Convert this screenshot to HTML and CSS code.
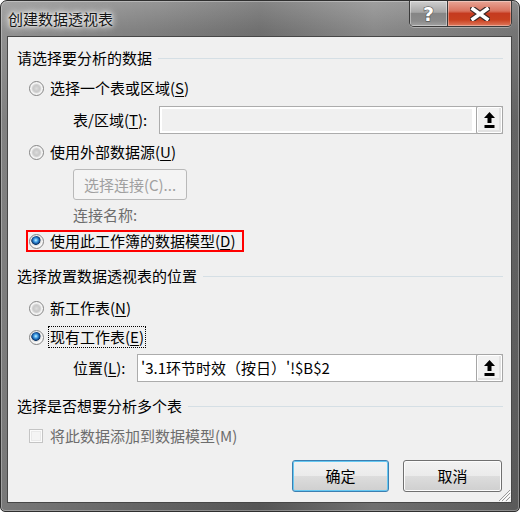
FILE: index.html
```html
<!DOCTYPE html>
<html lang="zh-CN">
<head>
<meta charset="utf-8">
<title>创建数据透视表</title>
<link rel="stylesheet" href="styles.css">
</head>
<body>
<div class="window">
  <div class="titlebar">
    <div class="title">创建数据透视表</div>
    <div class="caption-buttons">
      <div class="cap-btn help"><span>?</span></div>
      <div class="cap-btn close">
        <svg width="20" height="14" viewBox="0 0 20 14">
          <path d="M3 2 L17 12 M17 2 L3 12" stroke="#3a2a28" stroke-width="6" stroke-linecap="square" fill="none"/>
          <path d="M3 2 L17 12 M17 2 L3 12" stroke="#ffffff" stroke-width="3.6" stroke-linecap="square" fill="none"/>
        </svg>
      </div>
    </div>
  </div>
  <div class="client">
    <div class="group-head head-1"><span>请选择要分析的数据</span><i class="rule"></i></div>

    <div class="option opt-1"><span class="radio"></span><span class="opt-text">选择一个表或区域(<u>S</u>)</span></div>

    <div class="field-row row-table">
      <span class="field-label label-table">表/区域(<u>T</u>):</span>
      <div class="ref-box disabled">
        <div class="ref-input"></div>
        <div class="ref-btn">
          <svg width="11" height="16" viewBox="0 0 11 16"><path d="M5.5 0 L11 6 L7.5 6 L7.5 11 L3.5 11 L3.5 6 L0 6 Z" fill="#000"/><rect x="0.5" y="13" width="10" height="3" fill="#000"/></svg>
        </div>
      </div>
    </div>

    <div class="option opt-2"><span class="radio"></span><span class="opt-text">使用外部数据源(<u>U</u>)</span></div>

    <div class="conn-btn">选择连接(C)...</div>

    <div class="conn-label">连接名称:</div>

    <div class="highlight"><span class="radio checked"></span><span class="opt-text">使用此工作簿的数据模型(<u>D</u>)</span></div>

    <div class="group-head head-2"><span>选择放置数据透视表的位置</span><i class="rule"></i></div>

    <div class="option opt-4"><span class="radio"></span><span class="opt-text">新工作表(<u>N</u>)</span></div>

    <div class="option opt-5"><span class="radio checked focus-gap"></span><span class="opt-text focused">现有工作表(<u>E</u>)</span></div>

    <div class="field-row row-pos">
      <span class="field-label label-pos">位置(<u>L</u>):</span>
      <div class="ref-box">
        <div class="ref-input">'3.1环节时效（按日）'!$B$2</div>
        <div class="ref-btn">
          <svg width="11" height="16" viewBox="0 0 11 16"><path d="M5.5 0 L11 6 L7.5 6 L7.5 11 L3.5 11 L3.5 6 L0 6 Z" fill="#000"/><rect x="0.5" y="13" width="10" height="3" fill="#000"/></svg>
        </div>
      </div>
    </div>

    <div class="group-head head-3"><span>选择是否想要分析多个表</span><i class="rule"></i></div>

    <div class="option opt-cb"><span class="checkbox"></span><span class="opt-text gray">将此数据添加到数据模型(M)</span></div>

    <div class="actions">
      <div class="btn btn-ok">确定</div>
      <div class="btn btn-cancel">取消</div>
    </div>

    <svg class="grip" width="12" height="12" viewBox="0 0 12 12">
      <path d="M11 3 L3 11 M11 7 L7 11 M11 0 L0 11" stroke="#9a9a9a" stroke-width="1" fill="none"/>
      <path d="M12 4 L4 12 M12 8 L8 12 M12 1 L1 12" stroke="#ffffff" stroke-width="1" fill="none"/>
    </svg>
  </div>
</div>
</body>
</html>
```

FILE: styles.css
```css
* { box-sizing: border-box; }

html, body {
  margin: 0;
  padding: 0;
}

body {
  width: 520px;
  height: 512px;
  overflow: hidden;
  background: #ffffff;
  font-family: "Noto Sans CJK SC", "Microsoft YaHei", sans-serif;
  font-size: 15px;
  color: #000;
}

u { text-underline-offset: 2px; }

.window {
  width: 520px;
  height: 512px;
  border: 1px solid #2f2f2f;
  border-radius: 7px 7px 5px 5px;
  display: flex;
  flex-direction: column;
  background:
    linear-gradient(90deg, rgba(255,255,255,0.16) 0, rgba(255,255,255,0.02) 30%, rgba(0,0,0,0.1) 50%, rgba(255,255,255,0.1) 72%, rgba(0,0,0,0.06) 100%),
    linear-gradient(180deg, #949494 0, #7c7c7c 30px, #6a6a6a 120px, #5f5f5f 100%);
  box-shadow: inset 0 0 0 1px rgba(255,255,255,0.3);
}

.titlebar {
  height: 35px;
  flex-shrink: 0;
  display: flex;
  justify-content: space-between;
  align-items: flex-start;
}

.title {
  padding: 8px 0 0 7px;
  line-height: 20px;
  font-size: 15px;
  color: #151515;
  text-shadow: 0 0 6px #ffffff, 0 0 10px #ffffff, 0 0 3px rgba(255,255,255,0.9);
}

.caption-buttons {
  display: flex;
  margin-right: 7px;
  height: 26px;
  border: 1px solid #3a3a3a;
  border-top: none;
  border-radius: 0 0 5px 5px;
  overflow: hidden;
  box-shadow: 0 1px 0 rgba(255,255,255,0.35);
}

.cap-btn {
  height: 100%;
  display: flex;
  align-items: center;
  justify-content: center;
}

.help {
  width: 38px;
  border-right: 1px solid #3a3a3a;
  background: linear-gradient(180deg, #cfcfcf 0, #a6a6a6 45%, #868686 50%, #8b8b8b 80%, #a2a2a2 100%);
  box-shadow: inset 0 0 0 1px rgba(255,255,255,0.4);
}

.help span {
  font-family: "DejaVu Sans", sans-serif;
  font-weight: bold;
  font-size: 19px;
  line-height: 20px;
  color: #ffffff;
  -webkit-text-stroke: 1px #444;
  paint-order: stroke fill;
}

.close {
  width: 63px;
  background: linear-gradient(180deg, #e8a596 0, #d9735f 40%, #c53a1f 50%, #c8401f 75%, #e07a5e 100%);
  box-shadow: inset 0 0 0 1px rgba(255,255,255,0.35);
}

.client {
  position: relative;
  flex: 1;
  margin: 0 7px 8px 6px;
  border: 1px solid #474747;
  background: #f0f0f0;
  padding: 0 8px 0 9px;
  display: flex;
  flex-direction: column;
}

/* group headings */
.group-head {
  display: flex;
  align-items: center;
  height: 20px;
  line-height: 20px;
}

.group-head .rule {
  flex: 1;
  height: 1px;
  margin-left: 6px;
  background: #d5dfe5;
}

.head-1 { margin-top: 11px; }
.head-2 { margin-top: 14px; }
.head-3 { margin-top: 14px; }

/* options */
.option {
  display: flex;
  align-items: center;
  height: 20px;
  line-height: 20px;
  margin-left: 12px;
}

.opt-1 { margin-top: 10px; }
.opt-2 { margin-top: 8px; }
.opt-4 { margin-top: 12px; }
.opt-5 { margin-top: 8px; height: 22px; }
.opt-cb { margin-top: 10px; }

.radio {
  flex-shrink: 0;
  width: 15px;
  height: 15px;
  margin-right: 6px;
  border-radius: 50%;
  border: 1px solid #858585;
  background: radial-gradient(circle at 50% 50%, #dcdcdc 0, #c9c9c9 3px, #d2d2d2 4px, #ececec 5px, #fafafa 6.5px);
  box-shadow: inset 0 0 0 1px #f6f6f6;
}

.radio.checked {
  background: radial-gradient(circle at 45% 40%, #d4f1ff 0, #58b4ee 1.5px, #1f6cbb 3px, #0b3566 4.3px, #cfcfcf 4.9px, #e6e6e6 5.5px, #fafafa 6.5px);
}

.radio.focus-gap { margin-right: 4px; }

.opt-text { white-space: nowrap; }

.focused {
  border: 1px dotted #000;
  padding: 0 1px;
  line-height: 20px;
}

.gray { color: #6d6d6d; }

.checkbox {
  flex-shrink: 0;
  width: 14px;
  height: 14px;
  margin-right: 7px;
  border: 1px solid #c4c4c4;
  background: #f4f4f4;
  box-shadow: inset 0 0 0 1px #fbfbfb, inset 0 0 0 2px #e9e9e9;
}

/* reference fields */
.field-row {
  display: flex;
  align-items: center;
  height: 28px;
  margin-left: 56px;
}

.row-table { margin-top: 8px; }
.row-pos { margin-top: 6px; }

.field-label {
  flex-shrink: 0;
  line-height: 20px;
  white-space: nowrap;
}

.label-table { width: 86px; }
.label-pos { width: 64px; }

.ref-box {
  flex: 1;
  height: 28px;
  display: flex;
  border: 1px solid #acacac;
  background: #ffffff;
}

.ref-input {
  flex: 1;
  padding-left: 3px;
  line-height: 26px;
  white-space: nowrap;
  overflow: hidden;
}

.disabled .ref-input {
  background: #f0f0f0;
  border: 2px solid #ffffff;
  border-right-width: 4px;
}

.ref-btn {
  flex-shrink: 0;
  width: 27px;
  margin: -1px -1px -1px 0;
  border: 1px solid #a6a6a6;
  border-radius: 2px;
  background: #f2f2f2;
  box-shadow: inset 0 0 0 1px #ffffff, inset -1px -1px 0 2px #e2e2e2;
  display: flex;
  align-items: center;
  justify-content: center;
}

/* connection */
.conn-btn {
  margin-top: 7px;
  margin-left: 56px;
  width: 114px;
  height: 31px;
  border: 1px solid #b9b9b9;
  border-radius: 3px;
  background: #f4f4f4;
  color: #a0a0a0;
  display: flex;
  align-items: center;
  justify-content: center;
  line-height: 20px;
}

.conn-label {
  margin-top: 5px;
  margin-left: 56px;
  height: 20px;
  line-height: 20px;
  color: #6d6d6d;
}

.highlight {
  margin-top: 5px;
  margin-left: 9px;
  width: 218px;
  height: 22px;
  border: 2px solid #ff0000;
  padding-left: 1px;
  display: flex;
  align-items: center;
  line-height: 18px;
}

/* dialog buttons */
.actions {
  margin-top: 14px;
  margin-right: 1px;
  display: flex;
  justify-content: flex-end;
  gap: 14px;
}

.btn {
  height: 32px;
  border: 1px solid #707070;
  border-radius: 3px;
  background: linear-gradient(180deg, #f2f2f2 0, #ebebeb 50%, #dddddd 50%, #cfcfcf 100%);
  box-shadow: inset 0 0 0 1px #fcfcfc;
  display: flex;
  align-items: center;
  justify-content: center;
  line-height: 20px;
}

.btn-ok {
  width: 97px;
  border-color: #3c7fb1;
  box-shadow: inset 0 0 0 1px #66c8f2;
}

.btn-cancel { width: 99px; }

.grip {
  position: absolute;
  right: 0;
  bottom: 0;
}
```
